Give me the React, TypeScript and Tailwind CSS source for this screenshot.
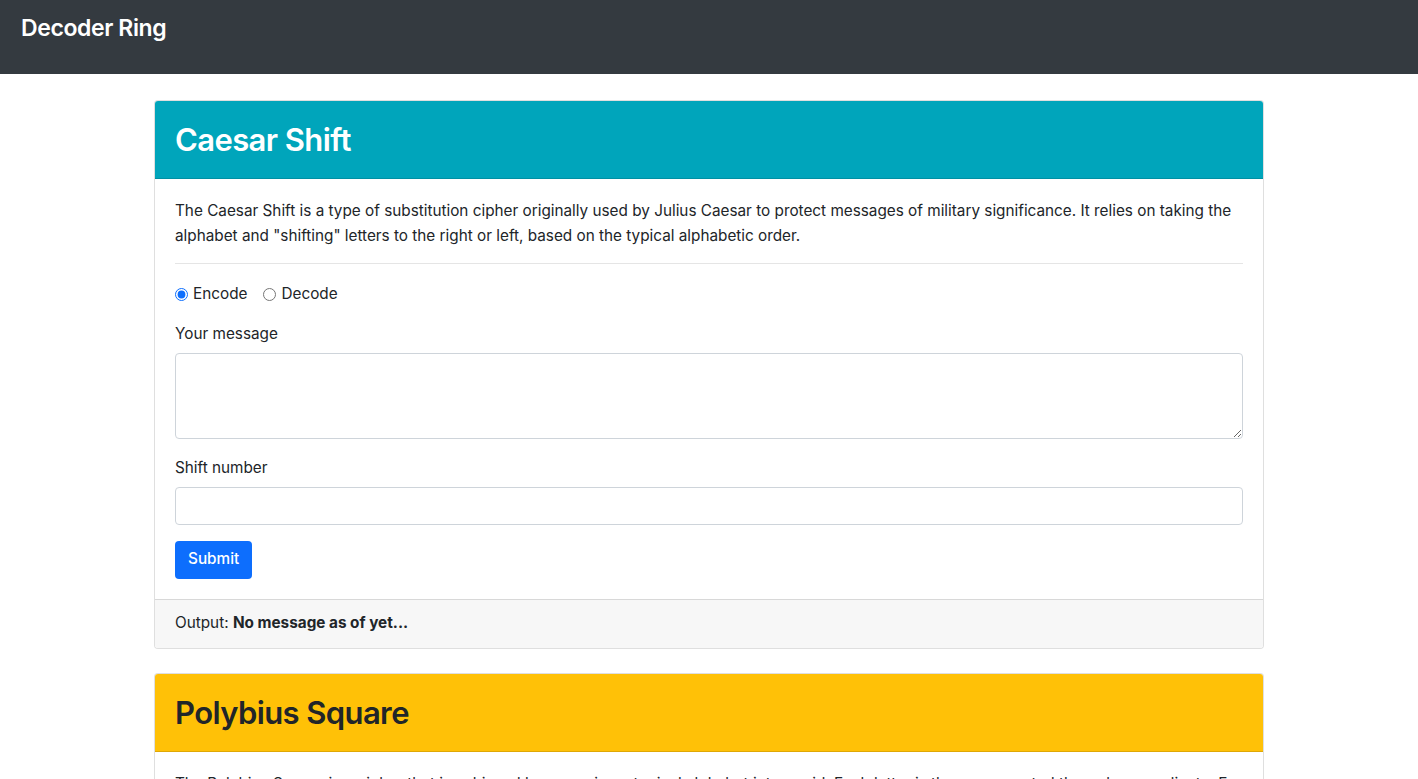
import { useState } from "react";

const fontStack = { fontFamily: "Inter, 'Noto Sans', 'Liberation Sans', sans-serif" };

function CaesarCard() {
  const [mode, setMode] = useState("encode");
  const [message, setMessage] = useState("");
  const [shift, setShift] = useState("");

  return (
    <div className="overflow-hidden rounded-[4px] border border-black/[0.125] bg-white">
      <div className="flex h-[78px] items-center border-b border-black/[0.125] bg-[#00a5bb] px-5">
        <h2 className="text-[31px] font-semibold leading-none tracking-[-0.6px] text-white">Caesar Shift</h2>
      </div>
      <div className="px-5 pt-[19px] pb-5">
        <p className="text-[15.3px] leading-[25px] text-[#212529]">
          The Caesar Shift is a type of substitution cipher originally used by Julius Caesar to protect messages of
          military significance. It relies on taking the alphabet and "shifting" letters to the right or left, based
          on the typical alphabetic order.
        </p>
        <hr className="mt-[15px] mb-[19px] border-black/10" />
        <div className="flex items-center gap-4 text-[15.3px] text-[#212529]">
          <label className="flex items-center gap-[5px]">
            <input
              type="radio"
              name="caesar-mode"
              checked={mode === "encode"}
              onChange={() => setMode("encode")}
              className="m-0 h-[13px] w-[13px] accent-[#0d6efd]"
            />
            Encode
          </label>
          <label className="flex items-center gap-[5px]">
            <input
              type="radio"
              name="caesar-mode"
              checked={mode === "decode"}
              onChange={() => setMode("decode")}
              className="m-0 h-[13px] w-[13px] accent-[#0d6efd]"
            />
            Decode
          </label>
        </div>
        <label className="mt-[16px] block text-[15.3px] leading-[24px] text-[#212529]">Your message</label>
        <textarea
          value={message}
          onChange={(e) => setMessage(e.target.value)}
          className="mt-[7px] block h-[86px] w-full rounded-[4px] border border-[#ced4da] px-3 py-[6px] text-[15px] outline-none"
        />
        <label className="mt-[17px] block text-[15.3px] leading-[24px] text-[#212529]">Shift number</label>
        <input
          type="number"
          value={shift}
          onChange={(e) => setShift(e.target.value)}
          className="mt-[7px] block h-[38px] w-full rounded-[4px] border border-[#ced4da] px-3 text-[15px] outline-none"
        />
        <button
          type="button"
          className="mt-[16px] h-[38px] rounded-[4px] bg-[#0d6efd] px-[13px] text-[15.3px] font-medium text-white"
        >
          Submit
        </button>
      </div>
      <div className="flex h-[49px] items-center border-t border-black/[0.125] bg-[#f7f7f7] px-5 text-[15.3px] text-[#212529]">
        Output:&nbsp;<strong className="font-bold">No message as of yet...</strong>
      </div>
    </div>
  );
}

function PolybiusCard() {
  return (
    <div className="overflow-hidden rounded-[4px] border border-black/[0.125] bg-white">
      <div className="flex h-[78px] items-center border-b border-black/[0.125] bg-[#ffc107] px-5">
        <h2 className="text-[31px] font-semibold leading-none tracking-[-0.6px] text-[#212529]">Polybius Square</h2>
      </div>
      <div className="px-5 pt-[19px] pb-5">
        <p className="text-[15.3px] leading-[25px] text-[#212529]">
          The Polybius Square is a cipher that is achieved by arranging a typical alphabet into a grid. Each letter is
          then represented through a coordinate. For example, in the grid below, the letter "B" would be represented
          by the numbers "21".
        </p>
      </div>
    </div>
  );
}

export default function App() {
  return (
    <div className="min-h-screen bg-white" style={fontStack}>
      <nav className="h-[74px] bg-[#343a40] px-[21px] pt-[13px]">
        <span className="block text-[23px] font-semibold leading-[30px] tracking-[-0.4px] text-white">Decoder Ring</span>
      </nav>
      <main className="mx-auto flex w-[1110px] flex-col gap-[24px] pt-[26px] pb-10">
        <CaesarCard />
        <PolybiusCard />
      </main>
    </div>
  );
}
